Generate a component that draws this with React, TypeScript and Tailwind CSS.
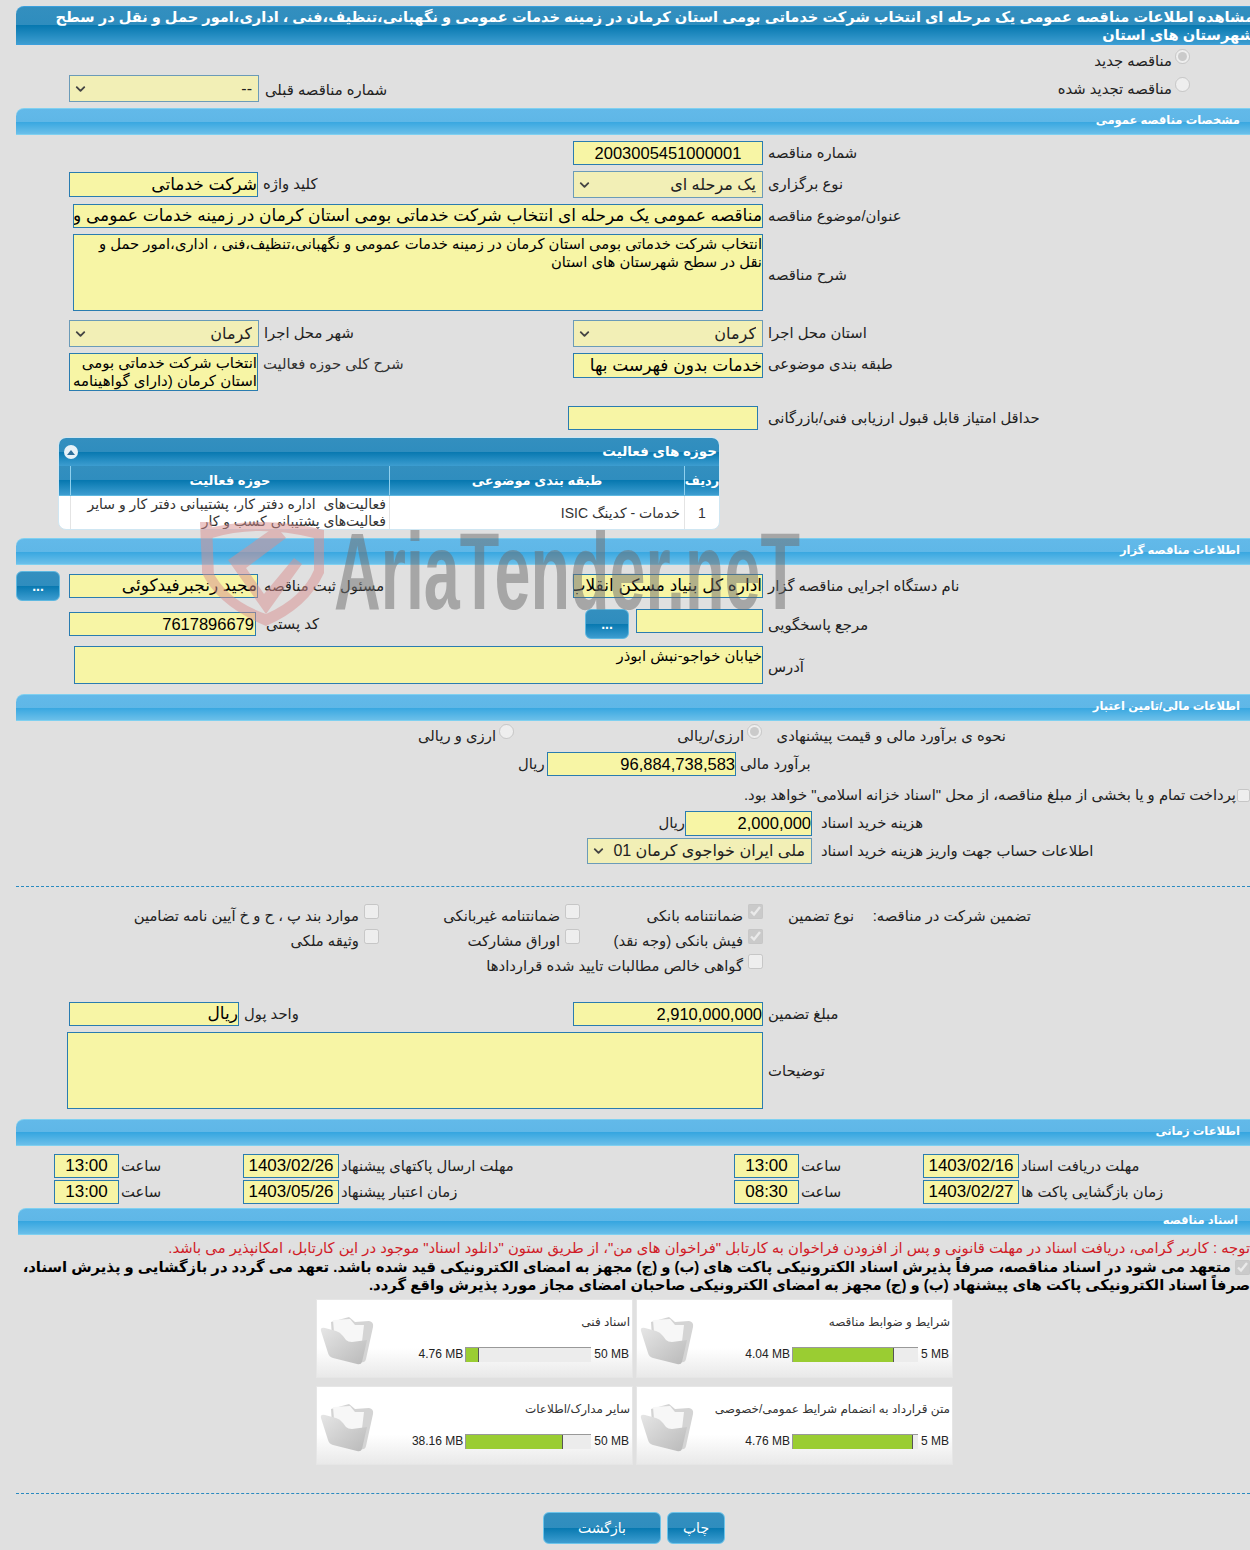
import type { ReactNode } from 'react';
import { ChevronDown } from 'lucide-react';

const darkGradient =
  'bg-[linear-gradient(180deg,#338fbf_0%,#2f8dbe_50%,#0778b0_50%,#3d9dd0_100%)]';
const fieldBase = 'box-border border border-[#2a7cb0] bg-[#f7f5a5] text-black outline-none';

function SectionBar({ title, className = 'ml-4' }: { title: string; className?: string }) {
  return (
    <div
      dir="rtl"
      className={`flex h-[27px] items-center rounded-tl-lg border-y border-[#7fd0f0] bg-[linear-gradient(180deg,#62b9e9_0%,#5fb7e7_50%,#36a6e0_50%,#6bbfe9_100%)] pb-[1px] pr-[10px] text-[11.5px] font-bold text-white ${className}`}
    >
      {title}
    </div>
  );
}

function Field({ value = '', className }: { value?: string; className: string }) {
  return <input dir="rtl" readOnly value={value} className={`${fieldBase} text-[17px] ${className}`} />;
}

function Area({ value = '', className }: { value?: string; className: string }) {
  return (
    <textarea
      dir="rtl"
      readOnly
      value={value}
      className={`${fieldBase} resize-none overflow-hidden leading-[18px] ${className}`}
    />
  );
}

function Select({ value, className }: { value: string; className: string }) {
  return (
    <div className={`relative shrink-0 ${className}`}>
      <select
        dir="rtl"
        disabled
        value={value}
        className="box-border size-full appearance-none border border-[#6b9bb8] bg-[#f2efb6] pr-[6px] text-[16px] text-[#222] opacity-100 outline-none"
      >
        <option value={value}>{value}</option>
      </select>
      <ChevronDown
        strokeWidth={3}
        className="pointer-events-none absolute left-[4px] top-1/2 size-[15px] -translate-y-1/2 text-[#444]"
      />
    </div>
  );
}

function Label({
  children,
  className = '',
  align = 'left',
}: {
  children: ReactNode;
  className?: string;
  align?: 'left' | 'right';
}) {
  return (
    <span
      dir="rtl"
      className={`whitespace-nowrap text-[14.8px] text-[#222] ${align === 'right' ? 'text-right' : 'text-left'} ${className}`}
    >
      {children}
    </span>
  );
}

function DotsButton({ className }: { className: string }) {
  return (
    <button
      className={`rounded-md border border-[#5fb8e0] text-[14px] font-bold text-white ${darkGradient} ${className}`}
    >
      ...
    </button>
  );
}

function Check({ checked = false, label }: { checked?: boolean; label: string }) {
  return (
    <label className="flex items-start gap-[5px] text-[14.8px] text-[#222]">
      <input type="checkbox" disabled checked={checked} readOnly className="m-0 size-[15px]" />
      <span className="mt-[1px] whitespace-nowrap">{label}</span>
    </label>
  );
}

function Radio({ checked = false, label }: { checked?: boolean; label: string }) {
  return (
    <label className="flex items-start gap-[3px] text-[14.8px] text-[#222]">
      <input type="radio" disabled checked={checked} readOnly className="m-0 size-[15px]" />
      <span className="mt-[1px] whitespace-nowrap">{label}</span>
    </label>
  );
}

function FolderIcon() {
  return (
    <svg viewBox="0 0 56 50" className="h-[50px] w-[56px] shrink-0">
      <defs>
        <linearGradient id="folderFront" x1="0" y1="0" x2="1" y2="1">
          <stop offset="0" stopColor="#e6e6e6" />
          <stop offset="1" stopColor="#b9b9b9" />
        </linearGradient>
      </defs>
      <path d="M12 6 L30 1 L36 6 L50 5 Q55 6 54 11 L47 43 Q46 47 42 46 L14 36 Z" fill="#d4d4d4" />
      <path d="M14 4 L31 3 L36 9 L45 9 L42 34 L16 28 Z" fill="#f7f7f7" />
      <path
        d="M2 15 Q1 11 6 12 L17 15 Q21 16 24 20 L27 24 Q29 26 33 26 L48 24 L43 46 Q42 49 38 48 L14 42 Q10 41 9 37 Z"
        fill="url(#folderFront)"
      />
    </svg>
  );
}

function DocCard({
  title,
  used,
  max,
  fillClass,
}: {
  title: string;
  used: string;
  max: string;
  fillClass: string;
}) {
  return (
    <div className="flex h-[79px] w-[317px] border border-[#e6e6e6] bg-[linear-gradient(180deg,#ffffff_0%,#ffffff_62%,#e9e9e9_100%)] pl-[2px]">
      <div className="mt-[16px]">
        <FolderIcon />
      </div>
      <div className="flex flex-1 flex-col pr-[2px]">
        <div dir="rtl" className="mt-[13px] h-[20px] text-[12px] text-[#333]">
          {title}
        </div>
        <div className="mt-[12px] flex items-center justify-end gap-[2px] pr-[1px] text-[12px] text-[#222]">
          <span>{used}</span>
          <div className="h-[15px] w-[126px] border-t border-l border-[#999] bg-[#ececec]">
            <div className={`h-full border-r border-[#555] bg-[#9acd32] ${fillClass}`} />
          </div>
          <span className="ml-[1px]">{max}</span>
        </div>
      </div>
    </div>
  );
}

function TimePair({
  label,
  date,
  time,
  left,
}: {
  label: string;
  date: string;
  time: string;
  left?: boolean;
}) {
  return (
    <div className={`flex h-[24px] items-center pl-[54px] ${left ? 'w-[680px]' : 'flex-1'}`}>
      <input readOnly value={time} className={`${fieldBase} h-[24px] w-[65px] text-center text-[17px]`} />
      <Label className="ml-[2px] w-[122px]">ساعت</Label>
      <input readOnly value={date} className={`${fieldBase} h-[24px] w-[96px] text-center text-[17px]`} />
      <Label className="ml-[2px]">{label}</Label>
    </div>
  );
}

function Watermark() {
  return (
    <div className="pointer-events-none absolute left-[198px] top-[518px] flex h-[110px] w-[620px] items-end">
      <svg viewBox="0 0 130 110" className="h-[110px] w-[130px] shrink-0 opacity-50">
        <path
          d="M4 12 Q60 -4 126 12 L126 55 Q110 90 68 108 Q20 88 4 55 Z M14 20 L14 52 Q28 82 68 96 Q104 80 116 52 L116 20 Q60 6 14 20 Z"
          fill="#d98f8f"
          fillRule="evenodd"
        />
        <path d="M30 42 L78 8 L88 20 L48 50 L66 76 L96 40 L104 46 L68 96 Z" fill="#d98f8f" />
        <path d="M2 4 L14 4 L16 60 L4 50 Z" fill="#d98f8f" />
      </svg>
      <span className="mb-[2px] ml-[6px] origin-left scale-x-[0.588] whitespace-nowrap text-[110px] font-bold leading-[110px] text-[#6e6e6e] opacity-50">
        AriaTender.neT
      </span>
    </div>
  );
}

export default function App() {
  return (
    <div className="relative h-[1550px] w-[1250px] overflow-hidden bg-[#e0e0e0] pt-[6px] [font-family:'Liberation_Sans','DejaVu_Sans',sans-serif]">
      {/* title */}
      <div
        dir="rtl"
        className={`ml-4 h-[39px] overflow-hidden rounded-tl-lg border-y border-[#3c9fdc] pt-[1px] text-[14.6px] font-bold leading-[18px] text-white ${darkGradient}`}
      >
        <div className="-mr-[4px] whitespace-nowrap">
          مشاهده اطلاعات مناقصه عمومی یک مرحله ای انتخاب شرکت خدماتی بومی استان کرمان در زمینه خدمات عمومی و نگهبانی،تنظیف،فنی ، اداری،امور حمل و نقل در سطح
          <br />
          شهرستان های استان
        </div>
      </div>

      <div className="flex h-[63px]">
        <div className="flex w-[573px] items-start pl-[69px] pt-[30px]">
          <Select value="--" className="h-[27px] w-[190px]" />
          <Label className="ml-[6px] mt-[4px]">شماره مناقصه قبلی</Label>
        </div>
        <div dir="rtl" className="flex flex-1 flex-col gap-[5px] pr-[60px] pt-[4px]">
          <Radio checked label="مناقصه جدید" />
          <Radio label="مناقصه تجدید شده" />
        </div>
      </div>

      <SectionBar title="مشخصات مناقصه عمومی" />

      {/* general */}
      <div className="mt-[6px] flex h-[24px] items-center pl-[573px]">
        <input
          readOnly
          value="2003005451000001"
          className={`${fieldBase} h-[24px] w-[190px] text-center text-[16.5px]`}
        />
        <Label className="ml-[5px]">شماره مناقصه</Label>
      </div>
      <div className="mt-[6px] flex h-[27px] items-center pl-[69px]">
        <Field value="شرکت خدماتی" className="h-[25px] w-[189px]" />
        <Label className="ml-[5px] w-[310px]">کلید واژه</Label>
        <Select value="یک مرحله ای" className="h-[27px] w-[190px]" />
        <Label className="ml-[5px]">نوع برگزاری</Label>
      </div>
      <div className="mt-[6px] flex h-[24px] items-center pl-[73px]">
        <Field
          value="مناقصه عمومی یک مرحله ای انتخاب شرکت خدماتی بومی استان کرمان در زمینه خدمات عمومی و نگهبانی"
          className="h-[24px] w-[690px]"
        />
        <Label className="ml-[5px]">عنوان/موضوع مناقصه</Label>
      </div>
      <div className="mt-[6px] flex h-[77px] items-center pl-[73px]">
        <Area
          value="انتخاب شرکت خدماتی بومی استان کرمان در زمینه خدمات عمومی و نگهبانی،تنظیف،فنی ، اداری،امور حمل و نقل در سطح شهرستان های استان"
          className="h-[77px] w-[690px] text-[14.8px] text-[#333]"
        />
        <Label className="ml-[5px] mt-[6px]">شرح مناقصه</Label>
      </div>
      <div className="mt-[9px] flex h-[27px] items-center pl-[69px]">
        <Select value="کرمان" className="h-[27px] w-[190px]" />
        <Label className="ml-[5px] w-[309px]">شهر محل اجرا</Label>
        <Select value="کرمان" className="h-[27px] w-[190px]" />
        <Label className="ml-[5px]">استان محل اجرا</Label>
      </div>
      <div className="mt-[6px] flex h-[38px] items-start pl-[69px]">
        <Area
          value="انتخاب شرکت خدماتی بومی استان کرمان (دارای گواهینامه"
          className="h-[38px] w-[189px] text-[15px]"
        />
        <Label className="ml-[5px] w-[310px] text-[#333]">شرح کلی حوزه فعالیت</Label>
        <Field value="خدمات بدون فهرست بها" className="h-[25px] w-[190px]" />
        <Label className="ml-[5px]">طبقه بندی موضوعی</Label>
      </div>
      <div className="mt-[15px] flex h-[24px] items-center pl-[568px]">
        <Field className="h-[24px] w-[190px]" />
        <Label className="ml-[10px]">حداقل امتیاز قابل قبول ارزیابی فنی/بازرگانی</Label>
      </div>

      {/* activity grid */}
      <div
        dir="rtl"
        className="ml-[58px] mt-[7px] h-[93px] w-[662px] overflow-hidden rounded-lg border border-[#cfe6f2] bg-white text-[13.5px]"
      >
        <div
          className={`flex h-[28px] items-center justify-between pl-[5px] pr-[2px] font-bold text-white ${darkGradient}`}
        >
          <span>حوزه های فعالیت</span>
          <span className="flex size-[14px] items-center justify-center rounded-full bg-[#e8f2f8]">
            <span className="border-x-[4px] border-b-[5px] border-x-transparent border-b-[#2f6f9a]" />
          </span>
        </div>
        <div className={`flex h-[30px] border-b border-[#5fb8e0] text-[13px] font-bold text-white ${darkGradient}`}>
          <div className="flex w-[35px] items-center justify-center border-l border-[#8fd0ee]">ردیف</div>
          <div className="flex w-[295px] items-center justify-center border-l border-[#8fd0ee]">طبقه بندی موضوعی</div>
          <div className="flex w-[319px] items-center justify-center border-l border-[#8fd0ee]">حوزه فعالیت</div>
        </div>
        <div className="flex h-[34px] text-[14px] text-[#333]">
          <div className="flex w-[35px] items-center justify-center border-l border-[#e4e4e4]">1</div>
          <div className="flex w-[295px] items-center border-l border-[#e4e4e4] pr-[4px]">خدمات - کدینگ ISIC</div>
          <div className="w-[319px] border-l border-[#e4e4e4] pr-[3px] leading-[17px]">
            فعالیت‌های&nbsp; اداره دفتر کار، پشتیبانی دفتر کار و سایر فعالیت‌های پشتیبانی کسب و کار
          </div>
        </div>
      </div>

      <div className="mt-[8px]">
        <SectionBar title="اطلاعات مناقصه گزار" />
      </div>

      {/* tender owner */}
      <div className="mt-[6px] flex h-[30px] items-center pl-4">
        <DotsButton className="mr-[9px] h-[30px] w-[44px]" />
        <Field value="مجید رنجبرفیدکوئی" className="h-[24px] w-[189px]" />
        <Label className="ml-[6px] w-[309px]">مسئول ثبت مناقصه</Label>
        <Field value="اداره کل بنیاد مسکن انقلاب اسلامی" className="h-[24px] w-[190px]" />
        <Label className="ml-[5px]">نام دستگاه اجرایی مناقصه گزار</Label>
      </div>
      <div className="mt-[8px] flex h-[30px] items-start pl-[69px]">
        <input
          dir="ltr"
          readOnly
          value="7617896679"
          className={`${fieldBase} mt-[3px] h-[24px] w-[187px] pr-[1px] text-right text-[16.5px]`}
        />
        <Label className="ml-[10px] mt-[4px] w-[319px]">کد پستی</Label>
        <DotsButton className="h-[30px] w-[44px]" />
        <Field className="ml-[7px] h-[24px] w-[127px]" />
        <Label className="ml-[5px] mt-[5px]">مرجع پاسخگویی</Label>
      </div>
      <div className="mt-[7px] flex h-[38px] items-center pl-[74px]">
        <Area value="خیابان خواجو-نبش ابوذر" className="h-[38px] w-[689px] text-[14.8px] text-[#333]" />
        <Label className="ml-[5px] mt-[4px]">آدرس</Label>
      </div>

      <div className="mt-[10px]">
        <SectionBar title="اطلاعات مالی/تامین اعتبار" />
      </div>

      {/* finance */}
      <div dir="rtl" className="mt-[4px] flex h-[22px] items-center pr-[244px]">
        <Label align="right" className="w-[244px]">نحوه ی برآورد مالی و قیمت پیشنهادی</Label>
        <div className="w-[248px]">
          <Radio checked label="ارزی/ریالی" />
        </div>
        <Radio label="ارزی و ریالی" />
      </div>
      <div className="mt-[5px] flex h-[24px] items-center pl-[518px]">
        <Label className="w-[29px]">ریال</Label>
        <input
          dir="ltr"
          readOnly
          value="96,884,738,583"
          className={`${fieldBase} h-[24px] w-[189px] text-right text-[16.5px]`}
        />
        <Label className="ml-[4px]">برآورد مالی</Label>
      </div>
      <div dir="rtl" className="mt-[8px] flex h-[22px] items-center">
        <input type="checkbox" disabled className="m-0 size-[13px]" />
        <Label align="right" className="mr-[1px]">پرداخت تمام و یا بخشی از مبلغ مناقصه، از محل "اسناد خزانه اسلامی" خواهد بود.</Label>
      </div>
      <div className="mt-[5px] flex h-[25px] items-center pl-[661px]">
        <Label className="w-[24px]">ریال</Label>
        <input
          dir="ltr"
          readOnly
          value="2,000,000"
          className={`${fieldBase} h-[25px] w-[127px] text-right text-[16.5px]`}
        />
        <Label className="ml-[9px]">هزینه خرید اسناد</Label>
      </div>
      <div className="mt-[2px] flex h-[26px] items-center pl-[587px]">
        <Select value="ملی ایران خواجوی کرمان 01" className="h-[26px] w-[225px]" />
        <Label className="ml-[9px]">اطلاعات حساب جهت واریز هزینه خرید اسناد</Label>
      </div>

      <div className="ml-4 mt-[22px] border-t border-dashed border-[#2a8ac0]" />

      {/* guarantee */}
      <div
        dir="rtl"
        className="mr-[219px] mt-[17px] grid grid-cols-[177px_91px_183px_201px_260px] grid-rows-[25px_25px_25px]"
      >
        <Label align="right" className="mt-[1px]">تضمین شرکت در مناقصه:</Label>
        <Label align="right" className="mt-[1px]">نوع تضمین</Label>
        <Check checked label="ضمانتنامه بانکی" />
        <Check label="ضمانتنامه غیربانکی" />
        <Check label="موارد بند پ ، ح و خ آیین نامه تضامین" />
        <span />
        <span />
        <Check checked label="فیش بانکی (وجه نقد)" />
        <Check label="اوراق مشارکت" />
        <Check label="وثیقه ملکی" />
        <span />
        <span />
        <div className="col-span-3">
          <Check label="گواهی خالص مطالبات تایید شده قراردادها" />
        </div>
      </div>

      <div className="mt-[23px] flex h-[24px] items-center pl-[69px]">
        <Field value="ریال" className="h-[24px] w-[170px]" />
        <Label className="ml-[5px] w-[329px]">واحد پول</Label>
        <input
          dir="ltr"
          readOnly
          value="2,910,000,000"
          className={`${fieldBase} h-[24px] w-[190px] text-right text-[16.5px]`}
        />
        <Label className="ml-[5px]">مبلغ تضمین</Label>
      </div>
      <div className="mt-[6px] flex h-[77px] items-center pl-[67px]">
        <Area className="h-[77px] w-[696px] text-[14.8px]" />
        <Label className="ml-[5px] mt-[2px]">توضیحات</Label>
      </div>

      <div className="mt-[10px]">
        <SectionBar title="اطلاعات زمانی" />
      </div>

      {/* dates */}
      <div className="mt-[8px] flex">
        <TimePair left label="مهلت ارسال پاکتهای پیشنهاد" date="1403/02/26" time="13:00" />
        <TimePair label="مهلت دریافت اسناد" date="1403/02/16" time="13:00" />
      </div>
      <div className="mt-[2px] flex">
        <TimePair left label="زمان اعتبار پیشنهاد" date="1403/05/26" time="13:00" />
        <TimePair label="زمان بازگشایی پاکت ها" date="1403/02/27" time="08:30" />
      </div>

      <div className="mt-[4px]">
        <SectionBar title="اسناد مناقصه" className="ml-[18px] pr-[12px]" />
      </div>

      {/* documents */}
      <div dir="rtl" className="mt-[3px] h-[20px] whitespace-nowrap text-[14.8px] leading-[20px] text-[#d01c28]">
        توجه : کاربر گرامی، دریافت اسناد در مهلت قانونی و پس از افزودن فراخوان به کارتابل "فراخوان های من"، از طریق ستون "دانلود اسناد" موجود در این کارتابل، امکانپذیر می باشد.
      </div>
      <div dir="rtl" className="flex h-[18px] items-center whitespace-nowrap text-[14.8px] font-bold leading-[18px] text-black">
        <input type="checkbox" disabled checked readOnly className="m-0 size-[15px] shrink-0" />
        <span className="mr-[4px]">
          متعهد می شود در اسناد مناقصه، صرفاً پذیرش اسناد الکترونیکی پاکت های (ب) و (ج) مجهز به امضای الکترونیکی قید شده باشد. تعهد می گردد در بازگشایی و پذیرش اسناد،
        </span>
      </div>
      <div dir="rtl" className="h-[18px] whitespace-nowrap text-[14.8px] font-bold leading-[18px] text-black">
        صرفاً اسناد الکترونیکی پاکت های پیشنهاد (ب) و (ج) مجهز به امضای الکترونیکی صاحبان امضای مجاز مورد پذیرش واقع گردد.
      </div>

      <div className="ml-[316px] mt-[5px] grid w-[637px] grid-cols-[317px_317px] gap-x-[3px] gap-y-[8px]">
        <DocCard title="اسناد فنی" used="4.76 MB" max="50 MB" fillClass="w-[10%]" />
        <DocCard title="شرایط و ضوابط مناقصه" used="4.04 MB" max="5 MB" fillClass="w-[81%]" />
        <DocCard title="سایر مدارک/اطلاعات" used="38.16 MB" max="50 MB" fillClass="w-[77%]" />
        <DocCard title="متن قرارداد به انضمام شرایط عمومی/خصوصی" used="4.76 MB" max="5 MB" fillClass="w-[96%]" />
      </div>

      <div className="ml-4 mt-[28px] border-t border-dashed border-[#2a8ac0]" />

      <div className="ml-[543px] mt-[18px] flex gap-[6px]">
        <button className={`h-[32px] w-[118px] rounded-md border border-[#6cc4ea] text-[14px] text-white ${darkGradient}`}>
          بازگشت
        </button>
        <button className={`h-[32px] w-[58px] rounded-md border border-[#6cc4ea] text-[14px] text-white ${darkGradient}`}>
          چاپ
        </button>
      </div>

      <Watermark />
    </div>
  );
}
